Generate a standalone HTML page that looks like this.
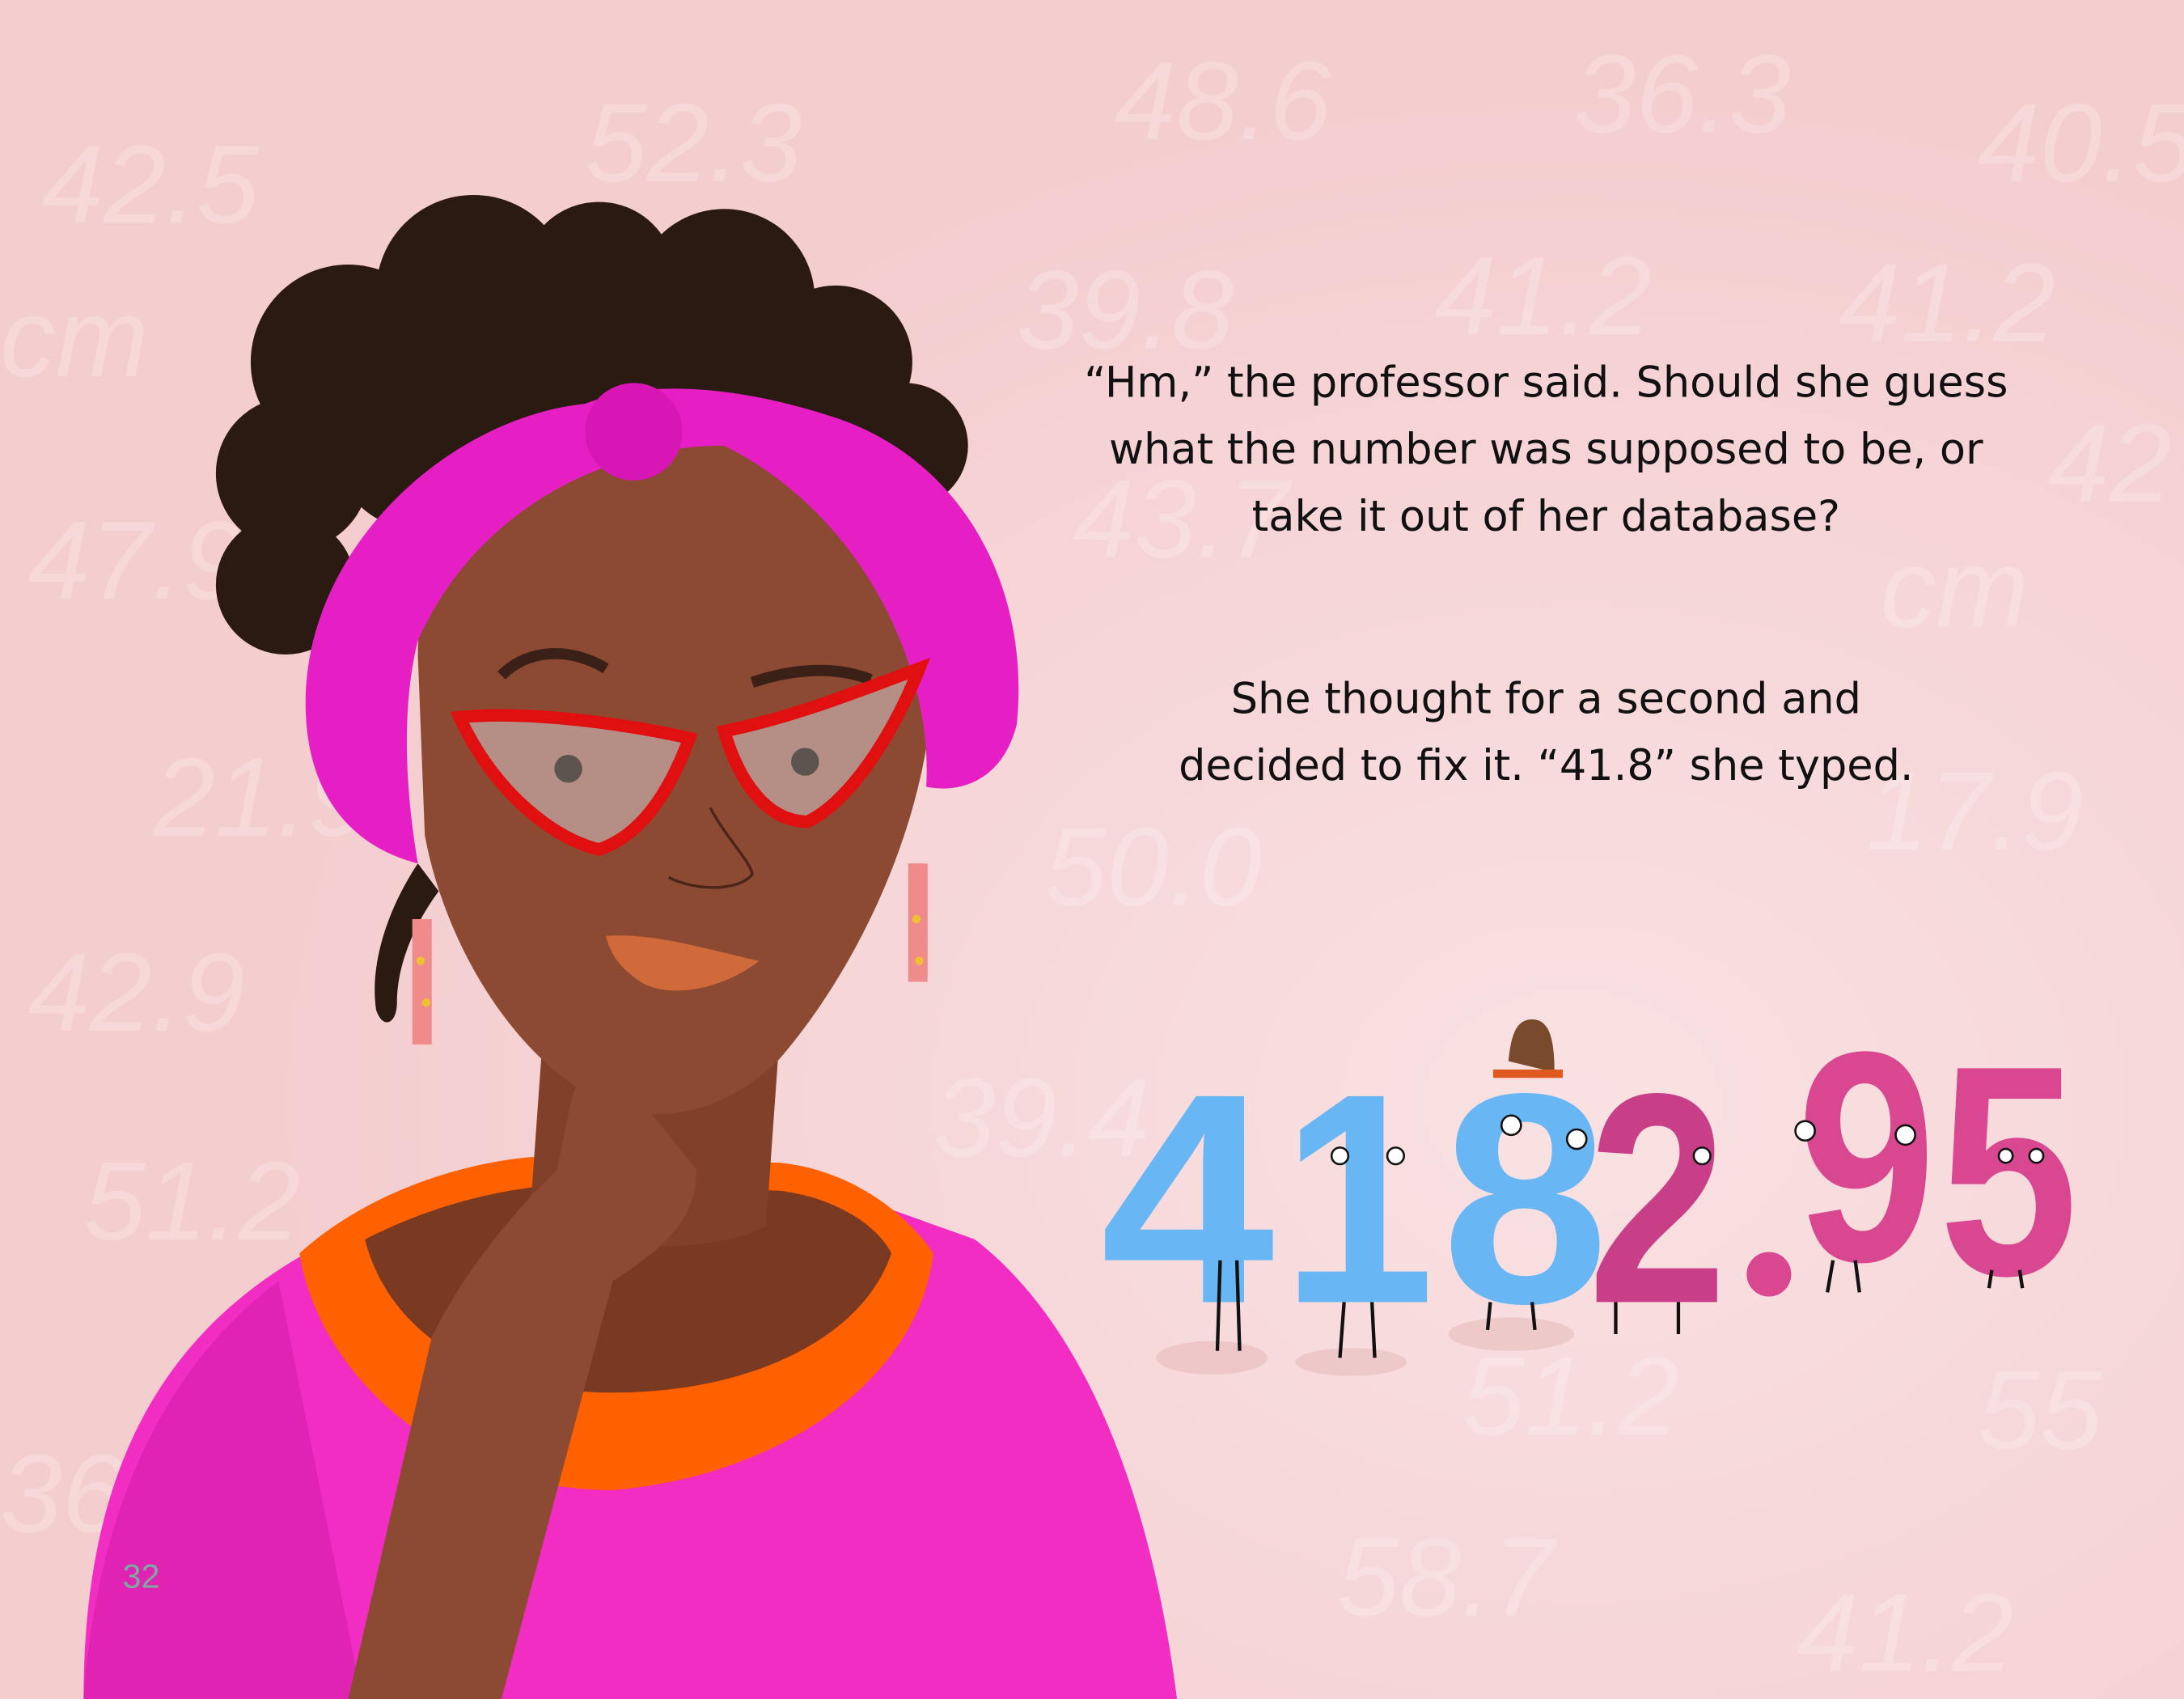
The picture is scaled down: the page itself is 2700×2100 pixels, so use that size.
<!DOCTYPE html>
<html><head><meta charset="utf-8">
<style>
html,body{margin:0;padding:0;width:2700px;height:2100px;overflow:hidden;background:#f5cfd1;}
svg{display:block}
</style></head>
<body>
<svg width="2700" height="2100" viewBox="0 0 1568 1220" preserveAspectRatio="none" xmlns="http://www.w3.org/2000/svg">
<defs>
<radialGradient id="bg" cx="0.72" cy="0.65" r="0.6">
<stop offset="0" stop-color="#f9e1e2"/><stop offset="1" stop-color="#f4cdcf"/>
</radialGradient>
</defs>
<rect width="1568" height="1220" fill="url(#bg)"/>
<!-- faint background numbers -->
<g font-family="Liberation Sans, sans-serif" font-size="80" fill="#ffffff" opacity="0.22" font-style="italic" font-weight="300">
<text x="30" y="160">42.5</text><text x="420" y="130">52.3</text><text x="800" y="100">48.6</text>
<text x="1130" y="95">36.3</text><text x="1420" y="130">40.5</text><text x="730" y="250">39.8</text>
<text x="1030" y="240">41.2</text><text x="1320" y="245">41.2</text><text x="20" y="430">47.9</text>
<text x="770" y="400">43.7</text><text x="110" y="600">21.9</text><text x="750" y="650">50.0</text>
<text x="1340" y="610">17.9</text><text x="20" y="740">42.9</text><text x="60" y="890">51.2</text>
<text x="670" y="830">39.4</text><text x="960" y="1160">58.7</text><text x="1290" y="1200">41.2</text>
<text x="1420" y="1040">55</text><text x="0" y="270">cm</text><text x="1350" y="450">cm</text>
<text x="1470" y="360">42</text><text x="1050" y="1030">51.2</text><text x="0" y="1100">36</text>
</g>
<!-- hair -->
<g fill="#2b1a12">
<circle cx="250" cy="260" r="70"/><circle cx="340" cy="210" r="70"/><circle cx="430" cy="200" r="55"/>
<circle cx="520" cy="215" r="65"/><circle cx="600" cy="260" r="55"/><circle cx="650" cy="320" r="45"/>
<circle cx="210" cy="340" r="55"/><circle cx="205" cy="420" r="50"/><circle cx="420" cy="280" r="80"/>
<circle cx="300" cy="320" r="60"/><circle cx="550" cy="300" r="60"/>
</g>
<path d="M300 620 C280 650 265 690 270 725 C275 740 285 735 285 720 C285 690 300 660 315 640 Z" fill="#2b1a12"/>
<!-- shirt -->
<path d="M60 1220 C60 1050 120 940 260 880 L400 840 L560 840 L700 890 C790 960 830 1100 845 1220 Z" fill="#f22dc4"/>
<path d="M60 1220 C70 1080 120 980 200 920 L260 1220 Z" fill="#d41ca8" opacity="0.6"/>
<!-- collar -->
<path d="M215 900 C270 850 350 830 400 830 L560 835 C610 840 650 870 670 900 C660 990 560 1060 440 1070 C320 1070 230 990 215 900 Z" fill="#ff6000"/>
<path d="M262 890 C320 860 380 850 420 850 L560 855 C600 860 630 880 640 900 C620 960 540 1000 440 1000 C350 1000 280 960 262 890 Z" fill="#7a3a22"/>
<!-- neck -->
<path d="M390 740 L380 880 C420 900 520 900 550 880 L560 740 Z" fill="#80402a"/>
<!-- face -->
<path d="M300 470 C300 360 380 300 480 300 C590 300 670 380 670 480 C670 580 620 690 560 760 C520 800 470 810 430 790 C370 760 320 680 305 600 Z" fill="#8c4a33"/>
<!-- headband -->
<path d="M220 520 C210 400 320 300 420 290 C470 270 540 280 600 300 C690 330 740 420 730 520 C720 560 690 570 665 565 C670 480 620 370 520 320 C430 320 340 370 300 460 C285 520 295 590 300 620 C260 610 225 580 220 520 Z" fill="#e61fc4"/>
<circle cx="455" cy="310" r="35" fill="#d816b6"/>
<!-- eyebrows -->
<path d="M360 485 C380 465 410 465 435 480" stroke="#3a2016" stroke-width="8" fill="none"/>
<path d="M540 490 C570 480 600 478 625 488" stroke="#3a2016" stroke-width="8" fill="none"/>
<!-- glasses -->
<path d="M330 515 C380 510 450 520 495 530 C480 570 460 600 430 610 C390 600 350 560 330 515 Z" fill="#b58e86" stroke="#e01010" stroke-width="9"/>
<path d="M520 525 C570 515 620 495 660 480 C640 530 610 575 580 590 C550 590 530 560 520 525 Z" fill="#b58e86" stroke="#e01010" stroke-width="9"/>
<circle cx="408" cy="552" r="10" fill="#5d5450"/><circle cx="578" cy="547" r="10" fill="#5d5450"/>
<!-- mouth -->
<path d="M435 672 C470 670 500 680 545 690 C520 710 480 718 460 705 C445 695 438 685 435 672 Z" fill="#d06a3a"/>
<!-- nose -->
<path d="M510 580 C520 600 540 620 540 628 C530 640 500 640 480 630" stroke="#4a2518" stroke-width="2" fill="none"/>
<!-- arm & hand -->
<path d="M250 1220 L310 960 C340 900 380 860 400 840 L410 790 C420 760 440 740 470 735 C480 745 470 770 460 790 L500 840 C500 880 470 900 440 920 L360 1220 Z" fill="#8c4a33"/>
<!-- earrings -->
<g fill="#f08b8b"><rect x="296" y="660" width="14" height="90"/><rect x="652" y="620" width="14" height="85"/></g>
<g fill="#f0c030"><circle cx="302" cy="690" r="3"/><circle cx="306" cy="720" r="3"/><circle cx="658" cy="660" r="3"/><circle cx="660" cy="690" r="3"/></g>
<!-- page number -->
<text x="88" y="1140" font-family="Liberation Sans, sans-serif" font-size="24" fill="#7ea8a0">32</text>
<!-- text -->
<g font-family="DejaVu Sans, Liberation Sans, sans-serif" font-size="30.5" fill="#111" text-anchor="middle">
<text x="1110" y="285">“Hm,” the professor said. Should she guess</text>
<text x="1110" y="333">what the number was supposed to be, or</text>
<text x="1110" y="381">take it out of her database?</text>
<text x="1110" y="512">She thought for a second and</text>
<text x="1110" y="560">decided to fix it. “41.8” she typed.</text>
</g>
<!-- number characters -->
<g fill="#e8bcbc" opacity="0.6"><ellipse cx="870" cy="975" rx="40" ry="12"/><ellipse cx="970" cy="978" rx="40" ry="10"/><ellipse cx="1085" cy="958" rx="45" ry="12"/></g>
<g font-family="Liberation Sans, sans-serif" font-weight="bold" font-size="215">
<text x="790" y="935" fill="#68b6f4" textLength="125" lengthAdjust="spacingAndGlyphs">4</text>
<text x="920" y="935" fill="#68b6f4" textLength="110" lengthAdjust="spacingAndGlyphs">1</text>
<text x="1035" y="935" fill="#68b6f4" textLength="120" lengthAdjust="spacingAndGlyphs">8</text>
<text x="1140" y="935" fill="#c83f88" textLength="100" lengthAdjust="spacingAndGlyphs">2</text>
<text x="1290" y="905" fill="#d8478f" textLength="100" lengthAdjust="spacingAndGlyphs">9</text>
<text x="1392" y="915" fill="#d8478f" textLength="100" lengthAdjust="spacingAndGlyphs">5</text>
</g>
<circle cx="1270" cy="915" r="16" fill="#d8478f"/>
<g stroke="#111" stroke-width="2.5" fill="none">
<path d="M876 905 L874 970 M888 905 L890 970"/><path d="M965 935 L962 975 M985 935 L987 975"/>
<path d="M1070 935 L1068 955 M1100 935 L1102 955"/><path d="M1160 935 L1160 958 M1205 935 L1205 958"/>
<path d="M1316 905 L1312 928 M1332 905 L1335 928"/><path d="M1430 912 L1428 925 M1450 912 L1452 925"/>
</g>
<g fill="#fff" stroke="#111" stroke-width="1.5">
<circle cx="962" cy="830" r="6"/><circle cx="1002" cy="830" r="6"/><circle cx="1085" cy="808" r="7"/><circle cx="1132" cy="818" r="7"/>
<circle cx="1296" cy="812" r="7"/><circle cx="1368" cy="815" r="7"/><circle cx="1222" cy="830" r="6"/><circle cx="1440" cy="830" r="5"/><circle cx="1462" cy="830" r="5"/>
</g>
<path d="M1083 762 C1085 740 1090 732 1100 732 C1112 732 1116 745 1116 770 Z" fill="#7a4a2c"/>
<rect x="1072" y="768" width="50" height="6" fill="#e05a20"/>
</svg>
</body></html>
